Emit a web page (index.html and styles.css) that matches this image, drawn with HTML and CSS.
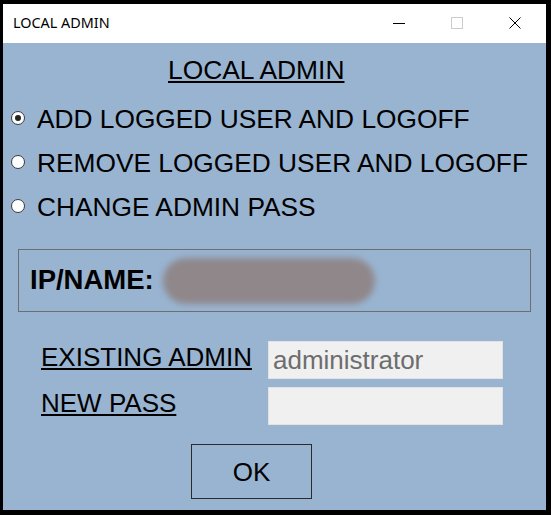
FILE: index.html
```html
<!DOCTYPE html>
<html>
<head>
<meta charset="utf-8">
<link rel="stylesheet" href="styles.css">
</head>
<body>
<div class="window">
  <div class="titlebar">
    <span class="title">LOCAL ADMIN</span>
    <div class="controls">
      <span class="ctl"><svg width="46" height="20" viewBox="0 0 46 20"><line x1="17" y1="10.5" x2="29" y2="10.5" stroke="#000" stroke-width="1"/></svg></span>
      <span class="ctl"><svg width="46" height="20" viewBox="0 0 46 20"><rect x="17.5" y="4.5" width="11" height="11" fill="none" stroke="#cccccc" stroke-width="1"/></svg></span>
      <span class="ctl"><svg width="46" height="20" viewBox="0 0 46 20"><path d="M17.5 4.5 L28.5 15.5 M28.5 4.5 L17.5 15.5" stroke="#000" stroke-width="1"/></svg></span>
    </div>
  </div>
  <div class="client">
    <div class="heading">LOCAL ADMIN</div>
    <div class="options">
      <label class="opt"><input type="radio" name="mode" class="radio" checked><span>ADD LOGGED USER AND LOGOFF</span></label>
      <label class="opt"><input type="radio" name="mode" class="radio"><span>REMOVE LOGGED USER AND LOGOFF</span></label>
      <label class="opt"><input type="radio" name="mode" class="radio"><span>CHANGE ADMIN PASS</span></label>
    </div>
    <div class="ipbox">
      <span class="iplabel">IP/NAME:</span>
      <span class="blur"></span>
    </div>
    <div class="form">
      <span class="flabel">EXISTING ADMIN</span>
      <div class="field disabled">administrator</div>
      <span class="flabel">NEW PASS</span>
      <div class="field"></div>
    </div>
    <div class="okrow">
      <button class="okbtn">OK</button>
    </div>
  </div>
</div>
</body>
</html>
```

FILE: styles.css
```css
html, body {
  margin: 0;
  padding: 0;
  background: #000;
}
body {
  width: 551px;
  height: 515px;
  overflow: hidden;
}
.window {
  margin: 4px 5px 5px 3px;
  width: 543px;
  height: 506px;
  display: flex;
  flex-direction: column;
  background: #99b4d1;
}
.titlebar {
  height: 39px;
  background: #fff;
  display: flex;
  align-items: center;
  justify-content: space-between;
  padding-left: 10px;
  font-family: "Noto Sans", "Open Sans", sans-serif;
  font-size: 14.4px;
  color: #000;
}
.title {
  position: relative;
  top: -1px;
}
.controls {
  display: flex;
  margin-right: 2px;
}
.ctl {
  width: 58px;
  display: flex;
  justify-content: center;
  position: relative;
  top: -1px;
}
.ctl svg { display: block; }
.client {
  flex: 1;
  font-family: "Liberation Sans", Arial, sans-serif;
  font-size: 26px;
  line-height: 30px;
  color: #000;
  display: flex;
  flex-direction: column;
}
.heading {
  margin-top: 12px;
  margin-left: 165px;
  font-size: 26.4px;
  text-decoration: underline;
}
.options {
  margin-top: 12px;
  display: flex;
  flex-direction: column;
  font-size: 26.3px;
}
.opt {
  height: 44px;
  display: flex;
  align-items: center;
  padding-left: 8px;
  gap: 12px;
}
.radio {
  appearance: none;
  -webkit-appearance: none;
  margin: 0;
  width: 14px;
  height: 14px;
  border-radius: 50%;
  border: 1px solid #3a3a3a;
  background: #fff;
  display: grid;
  place-items: center;
  position: relative;
  top: -1px;
}
.radio:checked::after {
  content: "";
  width: 6px;
  height: 6px;
  border-radius: 50%;
  background: #222;
}
.ipbox {
  margin: 20px 0 0 15px;
  height: 61px;
  border: 1px solid #6e6e6e;
  display: flex;
  align-items: center;
  padding-left: 11px;
  box-sizing: content-box;
  width: 500px;
}
.iplabel {
  font-weight: bold;
  font-size: 27.5px;
  position: relative;
  top: -1px;
}
.blur {
  margin-left: 9px;
  width: 212px;
  height: 46px;
  border-radius: 23px;
  background: #8f878a;
  filter: blur(3px);
}
.form {
  margin: 29px 0 0 38px;
  display: grid;
  grid-template-columns: 227px 235px;
  row-gap: 8px;
}
.flabel {
  align-self: start;
  margin-top: 1px;
  text-decoration: underline;
  white-space: nowrap;
}
.field {
  height: 38px;
  box-sizing: border-box;
  background: #f0f0f0;
  border: 1px solid #e2e2e2;
  padding-left: 4px;
  display: flex;
  align-items: center;
  color: #6d6d6d;
}
.okrow {
  margin: 19px 0 0 188px;
}
.okbtn {
  width: 121px;
  height: 55px;
  box-sizing: border-box;
  background: #99b4d1;
  border: 1px solid #2b2b2b;
  font-family: "Liberation Sans", Arial, sans-serif;
  font-size: 26px;
  line-height: 30px;
  color: #000;
  padding: 0;
  margin: 0;
}
```
